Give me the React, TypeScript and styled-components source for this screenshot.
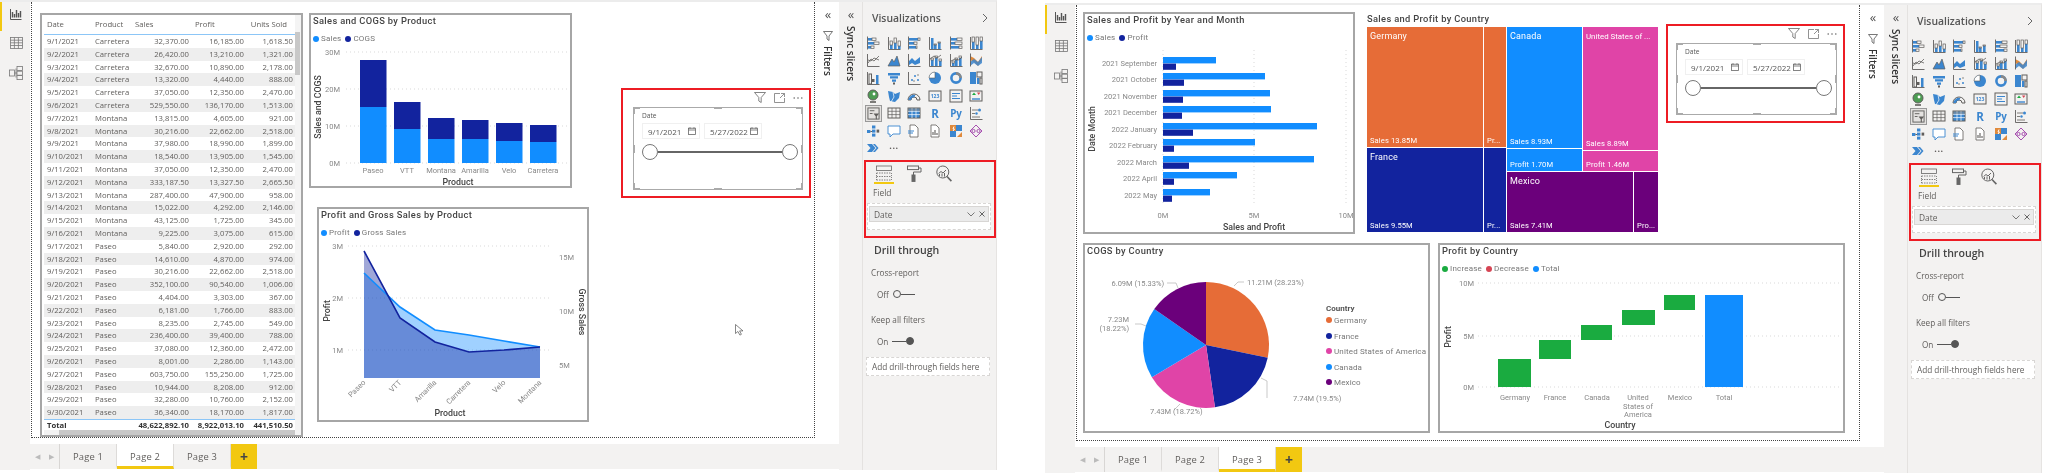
import * as React from "react"
import styled, { createGlobalStyle } from "styled-components"

const UI = `"Open Sans", "Liberation Sans", sans-serif`
const DIN = `Roboto, "Liberation Sans", sans-serif`
const GREY = "#605e5c"
const BLUE = "#118dff"
const NAVY = "#12239e"
const ORANGE = "#e66c37"
const PINK = "#e044a7"
const PURPLE = "#6b007b"
const GREEN = "#1aab40"
const RED = "#d64554"
const YELLOW = "#f2c811"

const rows: string[][] = [
  ["9/1/2021", "Carretera", "32,370.00", "16,185.00", "1,618.50"],
  ["9/2/2021", "Carretera", "26,420.00", "13,210.00", "1,321.00"],
  ["9/3/2021", "Carretera", "32,670.00", "10,890.00", "2,178.00"],
  ["9/4/2021", "Carretera", "13,320.00", "4,440.00", "888.00"],
  ["9/5/2021", "Carretera", "37,050.00", "12,350.00", "2,470.00"],
  ["9/6/2021", "Carretera", "529,550.00", "136,170.00", "1,513.00"],
  ["9/7/2021", "Montana", "13,815.00", "4,605.00", "921.00"],
  ["9/8/2021", "Montana", "30,216.00", "22,662.00", "2,518.00"],
  ["9/9/2021", "Montana", "37,980.00", "18,990.00", "1,899.00"],
  ["9/10/2021", "Montana", "18,540.00", "13,905.00", "1,545.00"],
  ["9/11/2021", "Montana", "37,050.00", "12,350.00", "2,470.00"],
  ["9/12/2021", "Montana", "333,187.50", "13,327.50", "2,665.50"],
  ["9/13/2021", "Montana", "287,400.00", "47,900.00", "958.00"],
  ["9/14/2021", "Montana", "15,022.00", "4,292.00", "2,146.00"],
  ["9/15/2021", "Montana", "43,125.00", "1,725.00", "345.00"],
  ["9/16/2021", "Montana", "9,225.00", "3,075.00", "615.00"],
  ["9/17/2021", "Paseo", "5,840.00", "2,920.00", "292.00"],
  ["9/18/2021", "Paseo", "14,610.00", "4,870.00", "974.00"],
  ["9/19/2021", "Paseo", "30,216.00", "22,662.00", "2,518.00"],
  ["9/20/2021", "Paseo", "352,100.00", "90,540.00", "1,006.00"],
  ["9/21/2021", "Paseo", "4,404.00", "3,303.00", "367.00"],
  ["9/22/2021", "Paseo", "6,181.00", "1,766.00", "883.00"],
  ["9/23/2021", "Paseo", "8,235.00", "2,745.00", "549.00"],
  ["9/24/2021", "Paseo", "236,400.00", "39,400.00", "788.00"],
  ["9/25/2021", "Paseo", "37,080.00", "12,360.00", "2,472.00"],
  ["9/26/2021", "Paseo", "8,001.00", "2,286.00", "1,143.00"],
  ["9/27/2021", "Paseo", "603,750.00", "155,250.00", "1,725.00"],
  ["9/28/2021", "Paseo", "10,944.00", "8,208.00", "912.00"],
  ["9/29/2021", "Paseo", "32,280.00", "10,760.00", "2,152.00"],
  ["9/30/2021", "Paseo", "36,340.00", "18,170.00", "1,817.00"],
]

const GlobalStyle = createGlobalStyle`
  html, body { margin: 0; padding: 0; background: #fff; }
  * { box-sizing: border-box; }
`

const Page = styled.div`
  display: flex;
  align-items: flex-start;
  width: 2048px;
  height: 475px;
  overflow: hidden;
  background: #fff;
  font-family: ${UI};
  color: ${GREY};
  filter: blur(0.35px);
`

const Window = styled.div<{ $top: number; $left: number }>`
  display: flex;
  flex: none;
  width: 997px;
  height: 470px;
  margin-top: ${p => p.$top}px;
  margin-left: ${p => p.$left}px;
  border-top: 2px solid #ececec;
  border-right: 1px solid #e6e4e2;
`

const Sidebar = styled.nav`
  display: flex;
  flex-direction: column;
  flex: none;
  width: 30px;
  background: #f3f2f1;
`

const SideItem = styled.div<{ $active?: boolean }>`
  display: flex;
  align-items: flex-start;
  justify-content: center;
  height: 29px;
  padding-top: 6px;
  border-left: 2px solid ${p => (p.$active ? YELLOW : "transparent")};
`

const Main = styled.div`
  display: flex;
  flex-direction: column;
  flex: none;
  width: 809px;
`

const ContentRow = styled.div`
  display: flex;
  height: 442px;
`

const Canvas = styled.main<{ $pt: number; $pl: number; $h: number }>`
  display: flex;
  flex: none;
  position: relative;
  width: 784px;
  height: ${p => p.$h}px;
  margin-left: 1px;
  padding: ${p => p.$pt}px 0 0 ${p => p.$pl}px;
  border: 1px dotted #444;
  border-top: none;
`

const CanvasColumn = styled(Canvas)`
  flex-direction: column;
  gap: 9px;
`

const CanvasRow = styled.div`
  display: flex;
  align-items: flex-start;
`

const TableVisual = styled.section`
  display: flex;
  flex: none;
  width: 263px;
  height: 424px;
  padding-left: 2px;
  border: 2px solid #a6a6a6;
`

const TableBody = styled.div`
  display: flex;
  flex-direction: column;
  width: 251px;
  font-size: 7.7px;
`

const Cols = styled.div`
  display: grid;
  grid-template-columns: 48px 43px 54px 55px 49px;
  align-items: center;
  padding-right: 2px;
`

const HeadRow = styled(Cols)`
  height: 20px;
  padding-bottom: 2px;
  border-bottom: 1.5px solid #8cc6f7;
`

const DataRow = styled(Cols)<{ $odd: boolean }>`
  height: 12.8px;
  line-height: 12.8px;
  white-space: nowrap;
  background: ${p => (p.$odd ? "#eeeeee" : "#fff")};
`

const TotalRow = styled(Cols)`
  height: 11px;
  border-top: 1px solid #8cc6f7;
  font-weight: 700;
  color: #333;
  white-space: nowrap;
`

const Cell = styled.span<{ $right?: boolean; $pad?: number }>`
  text-align: ${p => (p.$right ? "right" : "left")};
  padding-left: ${p => (p.$right ? 0 : p.$pad ?? 3)}px;
  overflow: visible;
`

const HeadCell = styled(Cell)<{ $pr?: number }>`
  padding-right: ${p => p.$pr ?? 0}px;
`

const HScroll = styled.div`
  display: flex;
  align-items: center;
  height: 5px;
  background: #f3f3f3;
  font-size: 5px;
`

const HThumb = styled.div`
  flex: 1;
  height: 5px;
  margin-left: 15px;
  background: #c8c8c8;
`

const VScroll = styled.div`
  display: flex;
  flex-direction: column;
  width: 6px;
  background: #f4f4f4;
`

const VThumb = styled.div`
  width: 5px;
  height: 43px;
  margin-top: 17px;
  background: #c8c8c8;
`

const ChartStack = styled.div`
  display: flex;
  flex-direction: column;
  align-items: flex-start;
  flex: none;
  width: 280px;
  margin-left: 6px;
`

const Visual = styled.section<{ $w: number; $h: number; $ml?: number; $mt?: number }>`
  display: flex;
  flex-direction: column;
  flex: none;
  width: ${p => p.$w}px;
  height: ${p => p.$h}px;
  margin-left: ${p => p.$ml ?? 0}px;
  margin-top: ${p => p.$mt ?? 0}px;
  border: 2px solid #a6a6a6;
  background: #fff;
`

const Title = styled.h3`
  height: 13px;
  margin: 0;
  padding-left: 2px;
  font: 500 9.3px/12px ${DIN};
  letter-spacing: 0.35px;
  color: #444;
  white-space: nowrap;
`

const Legend = styled.div`
  display: flex;
  align-items: center;
  gap: 4px;
  height: 14px;
  margin-top: 4px;
  padding-left: 2px;
  font: 400 8px/14px ${DIN};
  letter-spacing: 0.2px;
  color: #777;
`

const LegendItem = styled.span`
  display: flex;
  align-items: center;
  gap: 2px;
`

const Dot = styled.i<{ $c: string }>`
  flex: none;
  width: 6px;
  height: 6px;
  border-radius: 50%;
  background: ${p => p.$c};
`

const Plot = styled.svg`
  display: block;
  font-family: ${DIN};
`

const Treemap = styled.section`
  display: flex;
  flex-direction: column;
  flex: none;
  width: 291px;
  height: 220px;
  margin-left: 12px;
`

const TreeTitle = styled(Title)`
  height: 15px;
  padding-left: 0;
  line-height: 14px;
`

const TreeBody = styled.div`
  display: flex;
  gap: 1px;
  height: 205px;
  color: #fff;
`

const TreeCol = styled.div<{ $w: number }>`
  display: flex;
  flex-direction: column;
  gap: 1px;
  flex: none;
  width: ${p => p.$w}px;
`

const TreeCell = styled.div<{ $c: string; $h?: number; $w?: number }>`
  display: flex;
  flex-direction: column;
  justify-content: space-between;
  flex: ${p => (p.$h || p.$w ? "none" : 1)};
  height: ${p => (p.$h ? `${p.$h}px` : "auto")};
  width: ${p => (p.$w ? `${p.$w}px` : "auto")};
  padding: 4px 2px 1px 3px;
  background: ${p => p.$c};
  white-space: nowrap;
`

const TreeSplit = styled.div<{ $h?: number }>`
  display: flex;
  gap: 1px;
  flex: ${p => (p.$h ? "none" : 1)};
  height: ${p => (p.$h ? `${p.$h}px` : "auto")};
`

const TreeName = styled.span<{ $narrow?: boolean }>`
  font: 400 ${p => (p.$narrow ? 7.9 : 9)}px/11px ${DIN};
  letter-spacing: ${p => (p.$narrow ? 0 : 0.15)}px;
`

const TreeVal = styled.span`
  font: 400 7.6px/10px ${DIN};
  letter-spacing: 0.1px;
`

const TreeRowEnd = styled.div`
  display: flex;
  flex-direction: column;
  justify-content: flex-end;
  height: 100%;
`

const SlicerBox = styled.section<{ $w: number; $h: number; $ml: number; $mt: number; $pl: number }>`
  display: flex;
  flex-direction: column;
  flex: none;
  width: ${p => p.$w}px;
  height: ${p => p.$h}px;
  margin-left: ${p => p.$ml}px;
  margin-top: ${p => p.$mt}px;
  padding-left: ${p => p.$pl}px;
  padding-right: 6px;
  border: 2px solid #ed1c24;
`

const SlicerTools = styled.div`
  display: flex;
  justify-content: flex-end;
  align-items: center;
  gap: 8px;
  flex: none;
  height: 17px;
  padding-bottom: 2px;
`

const Slicer = styled.div`
  position: relative;
  flex: 1;
  margin-bottom: 6px;
  padding: 3px 4px 0 8px;
  border: 1px solid #aaa;
`

const Handle = styled.i<{ $x: string; $y: string; $w: number; $h: number; $tx?: string; $ty?: string }>`
  position: absolute;
  left: ${p => p.$x};
  top: ${p => p.$y};
  width: ${p => p.$w}px;
  height: ${p => p.$h}px;
  background: #aaa;
  transform: translate(${p => p.$tx ?? "-50%"}, ${p => p.$ty ?? "-50%"});
`

const SlicerLabel = styled.div`
  font: 400 6.6px/9px ${UI};
  color: #555;
`

const DateRow = styled.div`
  display: flex;
  gap: 4px;
  margin-top: 3px;
`

const DateInput = styled.div`
  display: flex;
  align-items: center;
  justify-content: space-between;
  width: 58px;
  height: 16px;
  padding: 0 3px 0 5px;
  border: 1px solid #f0f0f0;
  font-size: 8px;
  color: #555;
`

const Range = styled.div`
  display: flex;
  align-items: center;
  margin-top: 5px;
`

const Thumb = styled.i`
  flex: none;
  width: 16px;
  height: 16px;
  border: 1.5px solid #777;
  border-radius: 50%;
  background: #fff;
`

const Rail = styled.i`
  flex: 1;
  height: 2px;
  background: #666;
`

const Cursor = styled.svg`
  position: absolute;
  left: 703px;
  top: 322px;
`

const FiltersPane = styled.aside`
  display: flex;
  flex-direction: column;
  align-items: center;
  flex: none;
  width: 23px;
  margin-left: 1px;
  padding-top: 6px;
  color: #333;
`

const FunnelSlot = styled.div`
  margin: 11px 0 5px;
`

const VerticalLabel = styled.span`
  writing-mode: vertical-rl;
  font: 600 10px/12px ${UI};
  color: #333;
`

const SyncLabel = styled(VerticalLabel)`
  margin-top: 6px;
`

const Collapse = styled.span`
  font: 400 13px/12px ${UI};
  letter-spacing: -1px;
  color: #555;
`

const TabBar = styled.div`
  display: flex;
  align-items: stretch;
  height: 25px;
  background: #f3f2f1;
`

const TabNav = styled.div`
  display: flex;
  align-items: center;
  justify-content: space-around;
  width: 30px;
  border-right: 1px solid #d8d6d4;
  font-size: 7px;
  color: #bbb;
`

const Tab = styled.div<{ $active?: boolean }>`
  display: flex;
  align-items: center;
  justify-content: center;
  width: 57px;
  padding-top: 2px;
  border-right: 1px solid #dddbd9;
  border-bottom: 3px solid ${p => (p.$active ? YELLOW : "transparent")};
  background: ${p => (p.$active ? "#fff" : "transparent")};
  font-size: 9.4px;
  letter-spacing: 0.2px;
  color: ${GREY};
`

const AddTab = styled.div`
  display: flex;
  align-items: center;
  justify-content: center;
  width: 26px;
  background: ${YELLOW};
  font-size: 14px;
  font-weight: 700;
  color: #444;
`

const SyncPane = styled.aside`
  display: flex;
  flex-direction: column;
  align-items: center;
  flex: none;
  width: 24px;
  padding-top: 6px;
  background: #f3f2f1;
  border-right: 1px solid #e4e2e0;
`

const VizPane = styled.aside`
  display: flex;
  flex-direction: column;
  flex: 1;
  background: #f3f2f1;
`

const VizHead = styled.div`
  display: flex;
  align-items: center;
  justify-content: space-between;
  height: 32px;
  padding: 0 8px 0 9px;
  font: 600 10.4px/14px ${UI};
  color: #555;
`

const IconGrid = styled.div`
  display: grid;
  grid-template-columns: repeat(6, 20.6px);
  grid-auto-rows: 17.6px;
  place-items: center;
  height: 126px;
`

const Highlight = styled.span`
  display: flex;
  padding: 1px;
  border: 1px solid #999;
  background: #e4e2e0;
`

const RedPanel = styled.div`
  flex: none;
  height: 78px;
  margin-left: 1px;
  border: 2px solid #ed1c24;
`

const PaneTabs = styled.div`
  display: flex;
  gap: 10px;
  height: 22px;
  padding: 2px 0 0 8px;
`

const PaneTab = styled.div<{ $active?: boolean }>`
  display: flex;
  justify-content: center;
  width: 20px;
  height: 20px;
  border-bottom: 2px solid ${p => (p.$active ? YELLOW : "transparent")};
  padding-top: 1px;
`

const FieldLabel = styled.div`
  padding: 3px 0 0 7px;
  font-size: 8.4px;
  line-height: 12px;
`

const Well = styled.div`
  width: 124px;
  height: 27px;
  margin: 4px 0 0 1px;
  padding: 2px 1px;
  border: 1px dashed #d8d6d4;
  background: #fff;
`

const Pill = styled.div`
  display: flex;
  align-items: center;
  height: 16px;
  padding: 0 3px 0 4px;
  border: 1px solid #d8d6d4;
  background: #ebebeb;
  font-size: 8.4px;
`

const PillText = styled.span`
  flex: 1;
`

const PillChevron = styled.svg`
  display: block;
  flex: none;
  margin-right: 4px;
`

const DrillTitle = styled.h4`
  margin: 4px 0 0 11px;
  font: 600 10.6px/16px ${UI};
  color: #444;
`

const DrillLabel = styled.div<{ $mt: number }>`
  margin: ${p => p.$mt}px 0 0 8px;
  font-size: 8.2px;
  line-height: 12px;
`

const ToggleRow = styled.div`
  display: flex;
  align-items: center;
  gap: 4px;
  height: 12px;
  margin: 9px 0 0 14px;
  font-size: 8.2px;
`

const Toggle = styled.div`
  display: flex;
  align-items: center;
  width: 22px;
`

const Knob = styled.i<{ $on?: boolean }>`
  flex: none;
  width: 8px;
  height: 8px;
  border-radius: 50%;
  border: 1px solid #555;
  background: ${p => (p.$on ? "#555" : "#f3f2f1")};
`

const Wire = styled.i`
  flex: 1;
  height: 1px;
  background: #555;
`

const DropBox = styled.div`
  width: 124px;
  height: 19px;
  margin: 10px 0 0 3px;
  padding-left: 5px;
  border: 1px dashed #d8d6d4;
  background: #fff;
  font-size: 8.2px;
  line-height: 17px;
  white-space: nowrap;
`

const Icon14 = styled.svg`
  display: block;
  flex: none;
  overflow: visible;
`

/* grid of the Visualizations pane, one drawing per chart type */
const g = GREY
const b = "#3b86cf"
const HB = (y: number, a: number, c: number) => (
  <React.Fragment key={y}>
    <rect x="2" y={y} width={a} height="2.6" fill={b} />
    <rect x={2 + a} y={y} width={c} height="2.6" fill="none" stroke={g} strokeWidth=".7" />
  </React.Fragment>
)
const VB = (x: number, a: number, c: number) => (
  <React.Fragment key={x}>
    <rect x={x} y={13 - a} width="2.6" height={a} fill={b} />
    <rect x={x} y={13 - a - c} width="2.6" height={c} fill="none" stroke={g} strokeWidth=".7" />
  </React.Fragment>
)
const axisL = <path d="M1.5 1v12.5h12" stroke={g} strokeWidth=".9" fill="none" />
const axisV = <path d="M1.5 .5v13" stroke={g} strokeWidth=".9" />

const vizIcons: React.ReactNode[] = [
  <>{axisV}{HB(2, 4, 4)}{HB(6, 6, 5)}{HB(10, 3, 3)}</>,
  <>{axisL}{VB(3, 4, 4)}{VB(7, 6, 5)}{VB(11, 3, 5)}</>,
  <>{axisV}{HB(2, 9, 2)}{HB(6, 5, 3)}{HB(10, 7, 1)}</>,
  <>{axisL}<rect x="3" y="2" width="2.5" height="11" fill={b} />{VB(6, 4, 1)}{VB(10, 6, 1)}</>,
  <>{axisV}{HB(2, 6, 5)}{HB(6, 4, 7)}{HB(10, 8, 3)}</>,
  <>{axisL}{VB(3, 7, 5)}{VB(7, 4, 8)}{VB(11, 8, 4)}</>,
  <>{axisL}<path d="M2 10l3-4 3 2 5-5M2 7l3 1 3-3 5 2" stroke={g} strokeWidth=".8" fill="none" /></>,
  <><path d="M1 13l4-7 2 3 3-6 3 10z" fill={b} /><path d="M1 13l4-7 2 3 3-6 3 10z" stroke={g} strokeWidth=".7" fill="none" /></>,
  <>{axisL}<path d="M2 8l3-3 3 3 5-4v6l-5 2-3-2-3 2z" fill={b} /></>,
  <>{axisL}{VB(3, 6, 2)}{VB(7, 8, 2)}{VB(11, 5, 2)}<path d="M2 6l4-3 3 2 4-3" stroke={g} strokeWidth=".8" fill="none" /></>,
  <>{axisL}{VB(3, 3, 2)}{VB(6, 6, 2)}{VB(10, 8, 2)}<path d="M2 8l4-2 4 1 3-3" stroke={g} strokeWidth=".8" fill="none" /></>,
  <><path d="M1 3l4 2 4 4 4-6v4l-4 6-4-4-4-2z" fill="#e08a3c" /><path d="M1 9l4-3 4 3 4-5v6l-4 3-4-3-4 3z" fill={b} opacity=".85" />{axisV}</>,
  <>{axisL}<rect x="3" y="3" width="2.5" height="10" fill="none" stroke={g} /><rect x="6" y="8" width="2.5" height="3" fill={g} /><rect x="10" y="4" width="2.5" height="9" fill={b} /></>,
  <><path d="M1 2h12v2.4H1zM3 5.2h8v2.4H3zM5 8.4h4v2.4H5z" fill={b} /><path d="M6 11.4h2v2H6z" fill={g} /></>,
  <>{axisL}<g fill={b}><circle cx="5" cy="9" r="1" /><circle cx="8" cy="5" r="1" /><circle cx="11" cy="9" r="1" /></g><g fill={g}><circle cx="7" cy="10" r=".7" /><circle cx="11" cy="4" r=".7" /></g></>,
  <><circle cx="7" cy="7" r="6" fill={b} /><path d="M7 7L1 7A6 6 0 0 1 7 1z" fill="#fff" stroke={g} strokeWidth=".6" /></>,
  <><circle cx="7" cy="7" r="4.6" fill="none" stroke={b} strokeWidth="2.6" /><path d="M7 2.4A4.6 4.6 0 0 1 11.6 7" fill="none" stroke="#8a8886" strokeWidth="2.6" /></>,
  <><rect x="1" y="1" width="6" height="12" fill={b} /><rect x="8" y="1" width="5" height="5" fill="none" stroke={g} /><rect x="8" y="7" width="2.4" height="6" fill={b} /><rect x="11" y="7" width="2" height="6" fill="none" stroke={g} /></>,
  <><circle cx="7" cy="6" r="5" fill="#4d9c53" stroke={g} /><circle cx="8" cy="5" r="1.4" fill="#fff" /><path d="M4 13h6" stroke={g} strokeWidth="1.6" /></>,
  <><path d="M1 2l5 1 2 2 5-2-1 6-4 4-5-1-1-4z" fill={b} /><path d="M6 3l1 5-3 5" stroke="#fff" strokeWidth=".7" fill="none" /></>,
  <><path d="M1 11a6 6 0 0 1 12 0h-3a3 3 0 0 0-6 0z" fill="none" stroke={g} strokeWidth="1" /><path d="M1.3 11a5.7 5.7 0 0 1 7-5l-1 2.4A3 3 0 0 0 4 11z" fill={b} /></>,
  <><rect x="1" y="2" width="12" height="10" fill="none" stroke={g} /><text x="7" y="9" textAnchor="middle" fontSize="5" fontWeight="700" fill={b}>123</text></>,
  <><rect x="1" y="1" width="12" height="12" fill="none" stroke={g} /><path d="M3 4.5h8M3 7h5M3 9.5h8" stroke={b} strokeWidth="1.2" /></>,
  <><rect x="1" y="2" width="12" height="10" fill="none" stroke={g} /><path d="M3 6l2-2.4L7 6z" fill="#1aab40" /><path d="M8 3.6h3.4L9.7 6z" fill={RED} /><path d="M3 10h8" stroke={b} strokeWidth="1.4" /></>,
  <Highlight><svg width="13" height="13" viewBox="0 0 14 14"><rect x="1" y="1" width="12" height="12" fill="none" stroke={g} /><path d="M3 4h5M3 7h3" stroke={g} /><path d="M7 7h6L10.6 10v3.5L9.4 12.6V10z" fill={g} /></svg></Highlight>,
  <><rect x="1" y="2" width="12" height="10" fill="none" stroke={g} /><path d="M1 5.300h12M1 8.600h12M5 2v10M9 2v10" stroke={g} strokeWidth=".7" /></>,
  <><rect x="1" y="2" width="12" height="10" fill={b} stroke={g} /><path d="M1 5.300h12M1 8.600h12M5 2v10M9 2v10" stroke="#fff" strokeWidth=".7" /><path d="M1 2h12v3H1z" fill="#8a8886" opacity=".5" /></>,
  <text x="7" y="11.500" textAnchor="middle" fontSize="11.500" fontWeight="700" fill={b} fontFamily={UI}>R</text>,
  <text x="7" y="11" textAnchor="middle" fontSize="9.800" fontWeight="700" fill={b} fontFamily={UI}>Py</text>,
  <>{axisL}<path d="M3 4h6M3 7.500h3M3 11h8" stroke={g} strokeWidth=".8" /><circle cx="10.500" cy="4" r="1.500" fill={b} /><circle cx="7.500" cy="7.500" r="1.200" fill={b} /></>,
  <><rect x="1" y="6" width="3.400" height="3" fill={b} /><rect x="6" y="1.500" width="3.400" height="3" fill={b} /><rect x="6" y="5.600" width="3.400" height="3" fill={b} /><rect x="6" y="9.600" width="3.400" height="3" fill={b} /><rect x="10.600" y="5.600" width="2.600" height="3" fill={g} /><path d="M4.400 7.500H6" stroke={g} /></>,
  <path d="M1 2h12v8H6l-3 3v-3H1z" fill="#fff" stroke={b} strokeWidth=".9" />,
  <><path d="M3 1h5l3 3v9H3z" fill="#fff" stroke={g} strokeWidth=".8" /><path d="M1 7h6M1 9h5" stroke={b} strokeWidth="1" /></>,
  <><path d="M3 1h5l3 3v9H3z" fill="#fff" stroke={g} strokeWidth=".8" /><path d="M5 11V8M7 11V6M9 11V9" stroke={g} strokeWidth="1.100" /></>,
  <><rect x="1" y="1" width="6" height="6" fill="#e08a3c" /><rect x="7" y="1" width="6" height="6" fill={b} /><rect x="1" y="7" width="6" height="6" fill={b} /><path d="M8 13l5-5v5z" fill="#e08a3c" /><path d="M5 2.500l-1 2.500h1.500L4 7" stroke="#fff" fill="none" /></>,
  <><path d="M7 1l6 6-6 6-6-6z" fill="none" stroke="#a74fb0" strokeWidth="1" /><circle cx="4.500" cy="7" r="1.600" fill="none" stroke="#a74fb0" /><circle cx="9.500" cy="7" r="1.600" fill="none" stroke="#a74fb0" /></>,
  <path d="M1 3h5l3.500 4L6 11H1l3.500-4zM7 3h2l3.500 4L9 11H7l3.500-4z" fill={b} />,
  <text x="7" y="8" textAnchor="middle" fontSize="9" fontWeight="700" fill={g} letterSpacing=".6">...</text>,
]

const VizGrid = () => (
  <IconGrid>
    {vizIcons.map((icon, i) =>
      i === 24 ? (
        <React.Fragment key={i}>{icon}</React.Fragment>
      ) : (
        <Icon14 key={i} width="14" height="14" viewBox="0 0 14 14">{icon}</Icon14>
      )
    )}
  </IconGrid>
)

const ReportIcon = () => (
  <Icon14 width="12" height="12" viewBox="0 0 12 12" fill="none" stroke="#555" strokeWidth="1">
    <path d="M.5 1v10.500h11" />
    <path d="M2.500 9.500V4M4.500 9.500V6M6.500 9.500V2M8.500 9.500V5M10.500 9.500V3" strokeWidth="1.400" />
  </Icon14>
)

const DataIcon = () => (
  <Icon14 width="13" height="12" viewBox="0 0 13 12" fill="none" stroke="#777" strokeWidth=".8">
    <rect x=".5" y=".5" width="12" height="11" />
    <path d="M.5 3.200h12M.5 5.800h12M.5 8.500h12M4.400 .5v11M8.400 .5v11" />
  </Icon14>
)

const ModelIcon = () => (
  <Icon14 width="14" height="14" viewBox="0 0 14 14" fill="none" stroke="#777" strokeWidth=".8">
    <rect x=".5" y="4" width="5" height="6" />
    <rect x="8" y=".5" width="5.500" height="4" />
    <rect x="8" y="5.200" width="5.500" height="4" />
    <rect x="8" y="9.600" width="5.500" height="4" />
    <path d="M5.500 7H8M7 2.500v9" />
  </Icon14>
)

const FieldsIcon = () => (
  <Icon14 width="16" height="17" viewBox="0 0 16 17" fill="none" stroke="#666" strokeWidth=".8">
    <rect x=".5" y="1" width="15" height="4.400" />
    <path d="M.5 8h15M.5 11.500h15M.5 15h15" strokeDasharray="1.500 1" />
    <path d="M.5 8v7M15.500 8v7" strokeDasharray="1 1" />
  </Icon14>
)

const RollerIcon = () => (
  <Icon14 width="15" height="17" viewBox="0 0 15 17" fill="none" stroke="#666" strokeWidth="1">
    <rect x=".5" y="1" width="11" height="3.600" />
    <path d="M11.500 3H14v4H6.500v3" />
    <rect x="5" y="10" width="3" height="6.400" fill="#666" />
  </Icon14>
)

const AnalyticsIcon = () => (
  <Icon14 width="16" height="17" viewBox="0 0 16 17" fill="none" stroke="#666" strokeWidth="1">
    <circle cx="6.800" cy="7" r="6" />
    <path d="M11 11.500l4.400 4.600" strokeWidth="1.600" />
    <path d="M2.600 8.500l2.400-2 2 1.500 3-3" />
    <path d="M3.500 11V9M6 11.600V8.500M8.500 11.600V8" strokeWidth="1" />
  </Icon14>
)

const CalendarIcon = () => (
  <Icon14 width="8" height="8" viewBox="0 0 8 8" fill="none" stroke="#666" strokeWidth=".8">
    <rect x=".5" y="1.200" width="7" height="6.300" />
    <path d="M.5 3h7M2 .2v1.600M6 .2v1.600" />
  </Icon14>
)

const SlicerVisual = ({ w, h, ml, mt, pl }: { w: number; h: number; ml: number; mt: number; pl: number }) => (
  <SlicerBox $w={w} $h={h} $ml={ml} $mt={mt} $pl={pl}>
    <SlicerTools>
      <Icon14 width="12" height="11" viewBox="0 0 12 11" fill="none" stroke="#666" strokeWidth=".8">
        <path d="M.5 .5h11L7.200 5.500V10.500L4.800 9V5.500z" />
      </Icon14>
      <Icon14 width="11" height="10" viewBox="0 0 11 10" fill="none" stroke="#777" strokeWidth=".8">
        <path d="M6 .5H.5v9h10V5M7 .5h3.500V4M10.500 .5L6 5" />
      </Icon14>
      <Icon14 width="10" height="4" viewBox="0 0 10 4" fill="#666">
        <circle cx="1.200" cy="2" r=".8" /><circle cx="5" cy="2" r=".8" /><circle cx="8.800" cy="2" r=".8" />
      </Icon14>
    </SlicerTools>
    <Slicer>
      <Handle $x="0" $y="0" $w={6} $h={2} $tx="0" />
      <Handle $x="0" $y="0" $w={2} $h={6} $ty="0" />
      <Handle $x="100%" $y="0" $w={6} $h={2} $tx="-100%" />
      <Handle $x="100%" $y="0" $w={2} $h={6} $ty="0" />
      <Handle $x="0" $y="100%" $w={6} $h={2} $tx="0" />
      <Handle $x="0" $y="100%" $w={2} $h={6} $ty="-100%" />
      <Handle $x="100%" $y="100%" $w={6} $h={2} $tx="-100%" />
      <Handle $x="100%" $y="100%" $w={2} $h={6} $ty="-100%" />
      <Handle $x="50%" $y="0" $w={8} $h={2} />
      <Handle $x="50%" $y="100%" $w={8} $h={2} />
      <Handle $x="0" $y="50%" $w={2} $h={8} />
      <Handle $x="100%" $y="50%" $w={2} $h={8} />
      <SlicerLabel>Date</SlicerLabel>
      <DateRow>
        <DateInput>9/1/2021<CalendarIcon /></DateInput>
        <DateInput>5/27/2022<CalendarIcon /></DateInput>
      </DateRow>
      <Range>
        <Thumb />
        <Rail />
        <Thumb />
      </Range>
    </Slicer>
  </SlicerBox>
)

const Axis = styled.text`
  font-size: 7.5px;
  fill: #888;
`

const AxisTitle = styled.text`
  font-size: 8.8px;
  font-weight: 500;
  fill: #444;
`

const Grid = styled.line`
  stroke: #d9d9d9;
  stroke-width: 1;
  stroke-dasharray: 1 3;
`

const SalesCogsChart = () => {
  const bars = [
    ["Paseo", 360, 60, 107],
    ["VTT", 394, 102, 129],
    ["Montana", 428, 118, 139],
    ["Amarilla", 462, 120, 139],
    ["Velo", 496, 123, 141],
    ["Carretera", 530, 125, 142],
  ] as const
  return (
    <Plot width="259" height="140" viewBox="311 46 259 140">
      {[52, 89, 126, 163].map((y, i) => (
        <React.Fragment key={y}>
          <Grid x1="346" x2="570" y1={y} y2={y} />
          <Axis x="340" y={y + 2.5} textAnchor="end">{["30M", "20M", "10M", "0M"][i]}</Axis>
        </React.Fragment>
      ))}
      {bars.map(([name, x, top, split]) => (
        <React.Fragment key={name}>
          <rect x={x} y={top} width="26.5" height={split - top} fill={NAVY} />
          <rect x={x} y={split} width="26.5" height={163 - split} fill={BLUE} />
          <Axis x={x + 13} y="172.5" textAnchor="middle">{name}</Axis>
        </React.Fragment>
      ))}
      <AxisTitle x="458" y="185" textAnchor="middle">Product</AxisTitle>
      <AxisTitle transform="translate(321 107) rotate(-90)" textAnchor="middle">Sales and COGS</AxisTitle>
    </Plot>
  )
}

const ProfitGrossChart = () => {
  const xs = [364, 400, 435, 469, 504, 540]
  const profit = [273, 307, 330, 335, 341, 347]
  const gross = [251, 318, 342, 352, 350, 347]
  const line = (v: number[]) => xs.map((x, i) => `${x},${v[i]}`).join(" ")
  const area = (v: number[]) => `364,378 ${line(v)} 540,378`
  const names = ["Paseo", "VTT", "Amarilla", "Carretera", "Velo", "Montana"]
  return (
    <Plot width="268" height="180" viewBox="319 240 268 180">
      {[246, 298, 350].map((y, i) => (
        <React.Fragment key={y}>
          <Grid x1="348" x2="552" y1={y} y2={y} />
          <Axis x="343" y={y + 2.5} textAnchor="end">{["3M", "2M", "1M"][i]}</Axis>
        </React.Fragment>
      ))}
      {[257, 311, 365].map((y, i) => (
        <Axis key={y} x="559" y={y + 2.5}>{["15M", "10M", "5M"][i]}</Axis>
      ))}
      <polygon points={area(profit)} fill={BLUE} fillOpacity=".4" />
      <polygon points={area(gross)} fill={NAVY} fillOpacity=".4" />
      <polyline points={line(profit)} fill="none" stroke={BLUE} strokeWidth="1.6" />
      <polyline points={line(gross)} fill="none" stroke={NAVY} strokeWidth="1.6" />
      {xs.map((x, i) => (
        <Axis key={x} transform={`translate(${x + 2} 383) rotate(-45)`} textAnchor="end">{names[i]}</Axis>
      ))}
      <AxisTitle x="450" y="416" textAnchor="middle">Product</AxisTitle>
      <AxisTitle transform="translate(330 311) rotate(-90)" textAnchor="middle">Profit</AxisTitle>
      <AxisTitle transform="translate(579 312) rotate(90)" textAnchor="middle">Gross Sales</AxisTitle>
    </Plot>
  )
}

const SalesProfitChart = () => {
  const months = [
    ["2021 September", 57, 1216, 1176],
    ["2021 October", 73, 1265, 1184],
    ["2021 November", 90, 1270, 1183],
    ["2021 December", 106, 1271, 1182],
    ["2022 January", 123, 1317, 1193],
    ["2022 February", 139, 1255, 1174],
    ["2022 March", 156, 1314, 1189],
    ["2022 April", 172, 1237, 1174],
    ["2022 May", 189, 1210, 1172],
  ] as const
  return (
    <Plot width="268" height="187" viewBox="1085 45 268 187">
      {[1163, 1254, 1346].map((x, i) => (
        <React.Fragment key={x}>
          <Grid x1={x} x2={x} y1="50" y2="205" />
          <Axis x={x} y="218" textAnchor="middle">{["0M", "5M", "10M"][i]}</Axis>
        </React.Fragment>
      ))}
      {months.map(([name, y, s, p]) => (
        <React.Fragment key={name}>
          <rect x="1163" y={y} width={s - 1163} height="6.4" fill={BLUE} />
          <rect x="1163" y={y + 6.6} width={p - 1163} height="6.2" fill={NAVY} />
          <Axis x="1157" y={y + 8.5} textAnchor="end">{name}</Axis>
        </React.Fragment>
      ))}
      <AxisTitle x="1254" y="230" textAnchor="middle">Sales and Profit</AxisTitle>
      <AxisTitle transform="translate(1095 129) rotate(-90)" textAnchor="middle">Date Month</AxisTitle>
    </Plot>
  )
}

const CogsPie = () => {
  const cx = 1206
  const cy = 345
  const r = 63
  const slices: [number, string][] = [
    [28.23, ORANGE], [19.5, NAVY], [18.72, PINK], [18.22, BLUE], [15.33, PURPLE],
  ]
  const at = (pct: number) => {
    const a = (pct / 100) * 2 * Math.PI
    return `${cx + r * Math.sin(a)} ${cy - r * Math.cos(a)}`
  }
  let run = 0
  const legend: [string, string, number][] = [
    ["Germany", ORANGE, 320], ["France", NAVY, 336], ["United States of America", PINK, 351],
    ["Canada", BLUE, 367], ["Mexico", PURPLE, 382],
  ]
  return (
    <Plot width="343" height="173" viewBox="1085 258 343 173">
      {slices.map(([v, c]) => {
        const d = `M${cx} ${cy}L${at(run)}A${r} ${r} 0 0 1 ${at(run + v)}Z`
        run += v
        return <path key={c} d={d} fill={c} />
      })}
      <g fill="none" stroke="#bbb" strokeWidth=".8">
        <path d="M1234 286l4-4h6M1178 288l-2-5h-9M1146 326l-5-2h-6M1261 378l6 3v17M1180 404l-6 6" />
      </g>
      <Axis x="1247" y="284.5">11.21M (28.23%)</Axis>
      <Axis x="1164" y="285.5" textAnchor="end">6.09M (15.33%)</Axis>
      <Axis x="1129" y="321.5" textAnchor="end">7.23M</Axis>
      <Axis x="1129" y="331" textAnchor="end">(18.22%)</Axis>
      <Axis x="1293" y="400.5">7.74M (19.5%)</Axis>
      <Axis x="1150" y="413.5">7.43M (18.72%)</Axis>
      <text x="1326" y="311" fontSize="8" fontWeight="700" fill="#555">Country</text>
      {legend.map(([name, c, y]) => (
        <React.Fragment key={name}>
          <circle cx="1329" cy={y} r="3" fill={c} />
          <text x="1334" y={y + 3} fontSize="8" fill="#777" letterSpacing=".15">{name}</text>
        </React.Fragment>
      ))}
    </Plot>
  )
}

const ProfitWaterfall = () => {
  const steps: [number, number, number, number][] = [
    [1498, 33, 359, 387],
    [1539, 32, 340, 359],
    [1581, 31, 325, 340],
    [1622, 33, 310, 325],
    [1664, 31, 295, 310],
  ]
  const labels: [string, number][] = [["Germany", 1515], ["France", 1555], ["Canada", 1597], ["Mexico", 1680], ["Total", 1724]]
  return (
    <Plot width="403" height="155" viewBox="1440 276 403 155">
      {[283, 336, 387].map((y, i) => (
        <React.Fragment key={y}>
          <Grid x1="1478" x2="1840" y1={y} y2={y} />
          <Axis x="1474" y={y + 2.5} textAnchor="end">{["10M", "5M", "0M"][i]}</Axis>
        </React.Fragment>
      ))}
      {steps.map(([x, w, top, bottom]) => (
        <rect key={x} x={x} y={top} width={w} height={bottom - top} fill={GREEN} />
      ))}
      <rect x="1705" y="295" width="38" height="92" fill={BLUE} />
      {labels.map(([name, x]) => (
        <Axis key={name} x={x} y="400" textAnchor="middle">{name}</Axis>
      ))}
      <Axis x="1638" y="400" textAnchor="middle">United</Axis>
      <Axis x="1638" y="408.5" textAnchor="middle">States of</Axis>
      <Axis x="1638" y="417" textAnchor="middle">America</Axis>
      <AxisTitle x="1620" y="428" textAnchor="middle">Country</AxisTitle>
      <AxisTitle transform="translate(1451 337) rotate(-90)" textAnchor="middle">Profit</AxisTitle>
    </Plot>
  )
}

const DataTable = () => (
  <TableVisual>
    <TableBody>
      <HeadRow>
        <Cell>Date</Cell>
        <Cell>Product</Cell>
        <Cell $pad={0}>Sales</Cell>
        <Cell $pad={6}>Profit</Cell>
        <HeadCell $right $pr={6}>Units Sold</HeadCell>
      </HeadRow>
      {rows.map((r, i) => (
        <DataRow key={r[0]} $odd={i % 2 === 1}>
          <Cell>{r[0]}</Cell>
          <Cell>{r[1]}</Cell>
          <Cell $right>{r[2]}</Cell>
          <Cell $right>{r[3]}</Cell>
          <Cell $right>{r[4]}</Cell>
        </DataRow>
      ))}
      <TotalRow>
        <Cell>Total</Cell>
        <Cell />
        <Cell $right>48,622,892.10</Cell>
        <Cell $right>8,922,013.10</Cell>
        <Cell $right>441,510.50</Cell>
      </TotalRow>
      <HScroll>
        <HThumb />
      </HScroll>
    </TableBody>
    <VScroll>
      <VThumb />
    </VScroll>
  </TableVisual>
)

const Page2 = () => (
  <Canvas $pt={11} $pl={8} $h={436}>
    <DataTable />
    <ChartStack>
      <Visual $w={263} $h={175}>
        <Title>Sales and COGS by Product</Title>
        <Legend>
          <LegendItem><Dot $c={BLUE} />Sales</LegendItem>
          <LegendItem><Dot $c={NAVY} />COGS</LegendItem>
        </Legend>
        <SalesCogsChart />
      </Visual>
      <Visual $w={272} $h={215} $ml={8} $mt={19}>
        <Title>Profit and Gross Sales by Product</Title>
        <Legend>
          <LegendItem><Dot $c={BLUE} />Profit</LegendItem>
          <LegendItem><Dot $c={NAVY} />Gross Sales</LegendItem>
        </Legend>
        <ProfitGrossChart />
      </Visual>
    </ChartStack>
    <SlicerVisual w={190} h={110} ml={32} mt={75} pl={10} />
    <Cursor width="9" height="12" viewBox="0 0 9 12" fill="#fff" stroke="#555" strokeWidth=".7">
      <path d="M.5 .5v9l2.400-2 2 3.600 1.500-.8-1.800-3.400H8z" />
    </Cursor>
  </Canvas>
)

const Tree = () => (
  <Treemap>
    <TreeTitle>Sales and Profit by Country</TreeTitle>
    <TreeBody>
      <TreeCol $w={139}>
        <TreeSplit $h={120}>
          <TreeCell $c={ORANGE}>
            <TreeName>Germany</TreeName>
            <TreeVal>Sales 13.85M</TreeVal>
          </TreeCell>
          <TreeCell $c={ORANGE} $w={22}>
            <span />
            <TreeVal>Pr...</TreeVal>
          </TreeCell>
        </TreeSplit>
        <TreeSplit>
          <TreeCell $c={NAVY}>
            <TreeName>France</TreeName>
            <TreeVal>Sales 9.55M</TreeVal>
          </TreeCell>
          <TreeCell $c={NAVY} $w={22}>
            <span />
            <TreeVal>Pr...</TreeVal>
          </TreeCell>
        </TreeSplit>
      </TreeCol>
      <TreeCol $w={151}>
        <TreeSplit $h={144}>
          <TreeCol $w={75}>
            <TreeCell $c={BLUE}>
              <TreeName>Canada</TreeName>
              <TreeVal>Sales 8.93M</TreeVal>
            </TreeCell>
            <TreeCell $c={BLUE} $h={22}>
              <TreeRowEnd><TreeVal>Profit 1.70M</TreeVal></TreeRowEnd>
            </TreeCell>
          </TreeCol>
          <TreeCol $w={75}>
            <TreeCell $c={PINK}>
              <TreeName $narrow>United States of ...</TreeName>
              <TreeVal>Sales 8.89M</TreeVal>
            </TreeCell>
            <TreeCell $c={PINK} $h={20}>
              <TreeRowEnd><TreeVal>Profit 1.46M</TreeVal></TreeRowEnd>
            </TreeCell>
          </TreeCol>
        </TreeSplit>
        <TreeSplit>
          <TreeCell $c={PURPLE}>
            <TreeName>Mexico</TreeName>
            <TreeVal>Sales 7.41M</TreeVal>
          </TreeCell>
          <TreeCell $c={PURPLE} $w={24}>
            <span />
            <TreeVal>Pro...</TreeVal>
          </TreeCell>
        </TreeSplit>
      </TreeCol>
    </TreeBody>
  </Treemap>
)

const Page3 = () => (
  <CanvasColumn $pt={7} $pl={6} $h={436}>
    <CanvasRow>
      <Visual $w={272} $h={222}>
        <Title>Sales and Profit by Year and Month</Title>
        <Legend>
          <LegendItem><Dot $c={BLUE} />Sales</LegendItem>
          <LegendItem><Dot $c={NAVY} />Profit</LegendItem>
        </Legend>
        <SalesProfitChart />
      </Visual>
      <Tree />
      <SlicerVisual w={179} h={99} ml={8} mt={12} pl={8} />
    </CanvasRow>
    <CanvasRow>
      <Visual $w={347} $h={190}>
        <Title>COGS by Country</Title>
        <CogsPie />
      </Visual>
      <Visual $w={407} $h={190} $ml={8}>
        <Title>Profit by Country</Title>
        <Legend>
          <LegendItem><Dot $c={GREEN} />Increase</LegendItem>
          <LegendItem><Dot $c={RED} />Decrease</LegendItem>
          <LegendItem><Dot $c={BLUE} />Total</LegendItem>
        </Legend>
        <ProfitWaterfall />
      </Visual>
    </CanvasRow>
  </CanvasColumn>
)

const Report = ({ top, left, active, children }: { top: number; left: number; active: number; children: React.ReactNode }) => (
  <Window $top={top} $left={left}>
    <Sidebar>
      <SideItem $active><ReportIcon /></SideItem>
      <SideItem><DataIcon /></SideItem>
      <SideItem><ModelIcon /></SideItem>
    </Sidebar>
    <Main>
      <ContentRow>
        {children}
        <FiltersPane>
          <Collapse>«</Collapse>
          <FunnelSlot>
            <Icon14 width="10" height="10" viewBox="0 0 10 10" fill="none" stroke="#555" strokeWidth=".8">
              <path d="M.5 .5h9L6 5v4.500L4 8V5z" />
            </Icon14>
          </FunnelSlot>
          <VerticalLabel>Filters</VerticalLabel>
        </FiltersPane>
      </ContentRow>
      <TabBar>
        <TabNav><span>◀</span><span>▶</span></TabNav>
        {["Page 1", "Page 2", "Page 3"].map((name, i) => (
          <Tab key={name} $active={i === active}>{name}</Tab>
        ))}
        <AddTab>+</AddTab>
      </TabBar>
    </Main>
    <SyncPane>
      <Collapse>«</Collapse>
      <SyncLabel>Sync slicers</SyncLabel>
    </SyncPane>
    <VizPane>
      <VizHead>
        Visualizations
        <Icon14 width="6" height="10" viewBox="0 0 6 10" fill="none" stroke="#666"><path d="M1 1l4 4-4 4" /></Icon14>
      </VizHead>
      <VizGrid />
      <RedPanel>
        <PaneTabs>
          <PaneTab $active><FieldsIcon /></PaneTab>
          <PaneTab><RollerIcon /></PaneTab>
          <PaneTab><AnalyticsIcon /></PaneTab>
        </PaneTabs>
        <FieldLabel>Field</FieldLabel>
        <Well>
          <Pill>
            <PillText>Date</PillText>
            <PillChevron width="8" height="5" viewBox="0 0 8 5" fill="none" stroke="#777"><path d="M.5 .5L4 4 7.500 .5" /></PillChevron>
            <Icon14 width="6" height="6" viewBox="0 0 6 6" fill="none" stroke="#666"><path d="M.5 .5l5 5M5.500 .5l-5 5" /></Icon14>
          </Pill>
        </Well>
      </RedPanel>
      <DrillTitle>Drill through</DrillTitle>
      <DrillLabel $mt={9}>Cross-report</DrillLabel>
      <ToggleRow>
        Off
        <Toggle><Knob /><Wire /></Toggle>
      </ToggleRow>
      <DrillLabel $mt={14}>Keep all filters</DrillLabel>
      <ToggleRow>
        On
        <Toggle><Wire /><Knob $on /></Toggle>
      </ToggleRow>
      <DropBox>Add drill-through fields here</DropBox>
    </VizPane>
  </Window>
)

const App: React.FunctionComponent = () => (
  <Page>
    <GlobalStyle />
    <Report top={0} left={0} active={1}><Page2 /></Report>
    <Report top={3} left={48} active={2}><Page3 /></Report>
  </Page>
)

export default App
